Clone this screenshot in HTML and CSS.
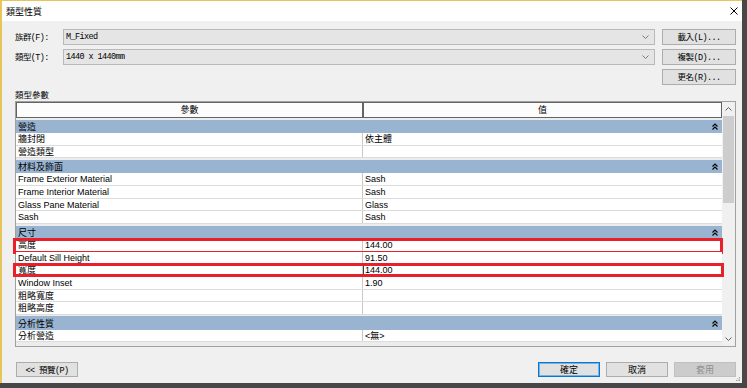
FILE: index.html
```html
<!DOCTYPE html>
<html lang="zh-Hant">

<head>
    <meta charset="UTF-8" />
    <meta name="viewport" content="width=device-width, initial-scale=1.0" />
    <title>類型性質</title>
    <link rel="stylesheet" href="styles.css">
</head>

<body>
    <div class="window">
        <div class="titlebar">
            <span class="title">類型性質</span>
            <svg class="close" width="8" height="8" viewBox="0 0 8 8">
                <path d="M0.5 0.5 7.5 7.5M7.5 0.5 0.5 7.5" stroke="#000" stroke-width="1" fill="none" />
            </svg>
        </div>

        <div class="content">
            <div class="top">
                <label class="lbl">族群(F):</label>
                <div class="combo">
                    <span>M_Fixed</span>
                    <svg width="7" height="4" viewBox="0 0 7 4"><path d="M0.5 0.5 3.5 3.5 6.5 0.5" stroke="#7a7a7a" fill="none" /></svg>
                </div>
                <button class="btn">載入(L)...</button>

                <label class="lbl">類型(T):</label>
                <div class="combo">
                    <span>1440 x 1440mm</span>
                    <svg width="7" height="4" viewBox="0 0 7 4"><path d="M0.5 0.5 3.5 3.5 6.5 0.5" stroke="#7a7a7a" fill="none" /></svg>
                </div>
                <button class="btn">複製(D)...</button>

                <button class="btn rename">更名(R)...</button>
            </div>

            <div class="caption">類型參數</div>

            <div class="grid">
                <div class="grid-main">
                    <div class="grid-head">
                        <div>參數</div>
                        <div>值</div>
                    </div>

                    <div class="group first">
                        <span>營造</span>
                        <svg width="6" height="7" viewBox="0 0 6 7"><path d="M0.5 3.5 3 1 5.5 3.5M0.5 6.5 3 4 5.5 6.5" stroke="#000" stroke-width="1.1" fill="none" /></svg>
                    </div>
                    <div class="row"><div class="k">牆封閉</div><div class="v">依主體</div></div>
                    <div class="row"><div class="k">營造類型</div><div class="v"></div></div>

                    <div class="group">
                        <span>材料及飾面</span>
                        <svg width="6" height="7" viewBox="0 0 6 7"><path d="M0.5 3.5 3 1 5.5 3.5M0.5 6.5 3 4 5.5 6.5" stroke="#000" stroke-width="1.1" fill="none" /></svg>
                    </div>
                    <div class="row"><div class="k">Frame Exterior Material</div><div class="v">Sash</div></div>
                    <div class="row"><div class="k">Frame Interior Material</div><div class="v">Sash</div></div>
                    <div class="row"><div class="k">Glass Pane Material</div><div class="v">Glass</div></div>
                    <div class="row"><div class="k">Sash</div><div class="v">Sash</div></div>

                    <div class="group">
                        <span>尺寸</span>
                        <svg width="6" height="7" viewBox="0 0 6 7"><path d="M0.5 3.5 3 1 5.5 3.5M0.5 6.5 3 4 5.5 6.5" stroke="#000" stroke-width="1.1" fill="none" /></svg>
                    </div>
                    <div class="row"><div class="k">高度</div><div class="v">144.00</div><span class="mark mark-a"></span></div>
                    <div class="row"><div class="k">Default Sill Height</div><div class="v">91.50</div></div>
                    <div class="row"><div class="k">寬度</div><div class="v edit">144.00</div><span class="mark mark-b"></span></div>
                    <div class="row"><div class="k">Window Inset</div><div class="v">1.90</div></div>
                    <div class="row"><div class="k">粗略寬度</div><div class="v"></div></div>
                    <div class="row"><div class="k">粗略高度</div><div class="v"></div></div>

                    <div class="group">
                        <span>分析性質</span>
                        <svg width="6" height="7" viewBox="0 0 6 7"><path d="M0.5 3.5 3 1 5.5 3.5M0.5 6.5 3 4 5.5 6.5" stroke="#000" stroke-width="1.1" fill="none" /></svg>
                    </div>
                    <div class="row"><div class="k">分析營造</div><div class="v">&lt;無&gt;</div></div>
                </div>

                <div class="scrollbar">
                    <div class="sb-arrow">
                        <svg width="7" height="4" viewBox="0 0 7 4"><path d="M0.5 3.5 3.5 0.5 6.5 3.5" stroke="#606060" fill="none" /></svg>
                    </div>
                    <div class="sb-thumb"></div>
                    <div class="sb-track"></div>
                    <div class="sb-arrow">
                        <svg width="7" height="4" viewBox="0 0 7 4"><path d="M0.5 0.5 3.5 3.5 6.5 0.5" stroke="#606060" fill="none" /></svg>
                    </div>
                </div>
            </div>

            <div class="footer">
                <button class="btn preview">&lt;&lt; 預覽(P)</button>
                <div class="actions">
                    <button class="btn primary">確定</button>
                    <button class="btn">取消</button>
                    <button class="btn" disabled>套用</button>
                </div>
            </div>
        </div>

        <svg class="grip" width="5" height="5" viewBox="0 0 5 5">
            <rect x="3" y="0" width="1" height="1" fill="#a0a0a0" />
            <rect x="1.5" y="1.5" width="1" height="1" fill="#a0a0a0" />
            <rect x="3" y="1.5" width="1" height="1" fill="#a0a0a0" />
            <rect x="0" y="3" width="1" height="1" fill="#a0a0a0" />
            <rect x="1.5" y="3" width="1" height="1" fill="#a0a0a0" />
            <rect x="3" y="3" width="1" height="1" fill="#a0a0a0" />
        </svg>
    </div>
</body>

</html>
```

FILE: styles.css
```css
html,
body {
    margin: 0;
    padding: 0;
    background: #474747;
}

body {
    font-family: "Liberation Sans", "Noto Sans CJK TC", sans-serif;
    font-size: 9px;
    color: #000;
}

.window {
    position: relative;
    width: 742px;
    height: 383px;
    box-sizing: border-box;
    display: flex;
    flex-direction: column;
    background: #f0f0f0;
    border-left: 2px solid #e6c65a;
    border-top: 1px solid #e6c65a;
}

.titlebar {
    height: 20px;
    display: flex;
    align-items: center;
    justify-content: space-between;
    padding: 0 4px 0 4px;
    background: #fff;
}

.title {
    font-family: "Noto Sans CJK TC", sans-serif;
    font-size: 9px;
}

.content {
    flex: 1;
    display: flex;
    flex-direction: column;
    padding: 7.5px 6px 6px 13px;
}

.top {
    display: grid;
    grid-template-columns: 41px 1fr 74px;
    grid-template-rows: 16px 16px 16px;
    column-gap: 7px;
    row-gap: 4px;
}

.lbl,
.combo,
.btn {
    font-family: "Liberation Mono", "Noto Sans CJK TC", monospace;
    font-size: 8.5px;
    letter-spacing: -0.6px;
}

.lbl {
    display: flex;
    align-items: center;
    white-space: nowrap;
}

.combo {
    display: flex;
    align-items: center;
    justify-content: space-between;
    padding: 0 5px 0 2px;
    background: #e5e5e5;
    border: 1px solid #b9b9b9;
}

.btn {
    height: 16px;
    padding: 0;
    color: #000;
    background: #e1e1e1;
    border: 1px solid #adadad;
}

.rename {
    grid-column: 3;
}

.caption {
    margin-top: 3px;
    height: 12px;
    line-height: 12px;
    font-family: "Noto Sans CJK TC", sans-serif;
    font-size: 8.5px;
}

.grid {
    margin-top: 1px;
    height: 246px;
    box-sizing: border-box;
    display: flex;
    background: #ececec;
    border: 1px solid #a0a0a0;
}

.grid-main {
    flex: 1;
}

.grid-head {
    display: grid;
    grid-template-columns: 347px 1fr;
    height: 16px;
}

.grid-head div {
    border: 1px solid #646464;
    background: #fcfcfc;
    text-align: center;
    line-height: 14px;
}

.group {
    height: 13.3px;
    margin-top: 1.5px;
    display: flex;
    align-items: center;
    justify-content: space-between;
    padding: 0 4px 0 2px;
    background: #99b4d1;
}

.group.first {
    margin-top: 2.3px;
}

.row {
    position: relative;
    height: 12.7px;
    box-sizing: border-box;
    display: grid;
    grid-template-columns: 347px 1fr;
    background: #fff;
    border-bottom: 1px solid #dcdcdc;
}

.row .k,
.row .v {
    padding-left: 2px;
    line-height: 12px;
    white-space: nowrap;
    overflow: hidden;
}

.row .k {
    border-right: 1px solid #c8c8c8;
}

.row .v.edit {
    box-shadow: inset 0 0 0 1px #3c3c3c;
}

.mark {
    position: absolute;
    border: 3px solid #e8202a;
    pointer-events: none;
}

.mark-a {
    top: -1px;
    left: -3px;
    right: -1px;
    bottom: -3px;
}

.mark-b {
    top: -1px;
    left: -3px;
    right: -2px;
    bottom: -1px;
}

.scrollbar {
    width: 13px;
    display: flex;
    flex-direction: column;
    background: #f0f0f0;
}

.sb-arrow {
    height: 14px;
    display: flex;
    align-items: center;
    justify-content: center;
}

.sb-thumb {
    height: 87px;
    margin: 0 1px;
    background: #cdcdcd;
}

.sb-track {
    flex: 1;
}

.footer {
    margin-top: auto;
    display: flex;
    justify-content: space-between;
}

.footer .btn {
    width: 62px;
    height: 15px;
}

.preview {
    margin-left: 1px;
}

.actions {
    display: flex;
    gap: 6px;
}

.actions .btn {
    font-family: "Noto Sans CJK TC", sans-serif;
    font-size: 9px;
    letter-spacing: 0;
}

.btn.primary {
    border-color: #0078d7;
    box-shadow: inset 0 0 0 1px rgba(0, 120, 215, 0.45);
}

.btn:disabled {
    color: #8c8c8c;
    background: #cccccc;
    border-color: #bfbfbf;
}

.grip {
    position: absolute;
    right: 1px;
    bottom: 1px;
}
```
